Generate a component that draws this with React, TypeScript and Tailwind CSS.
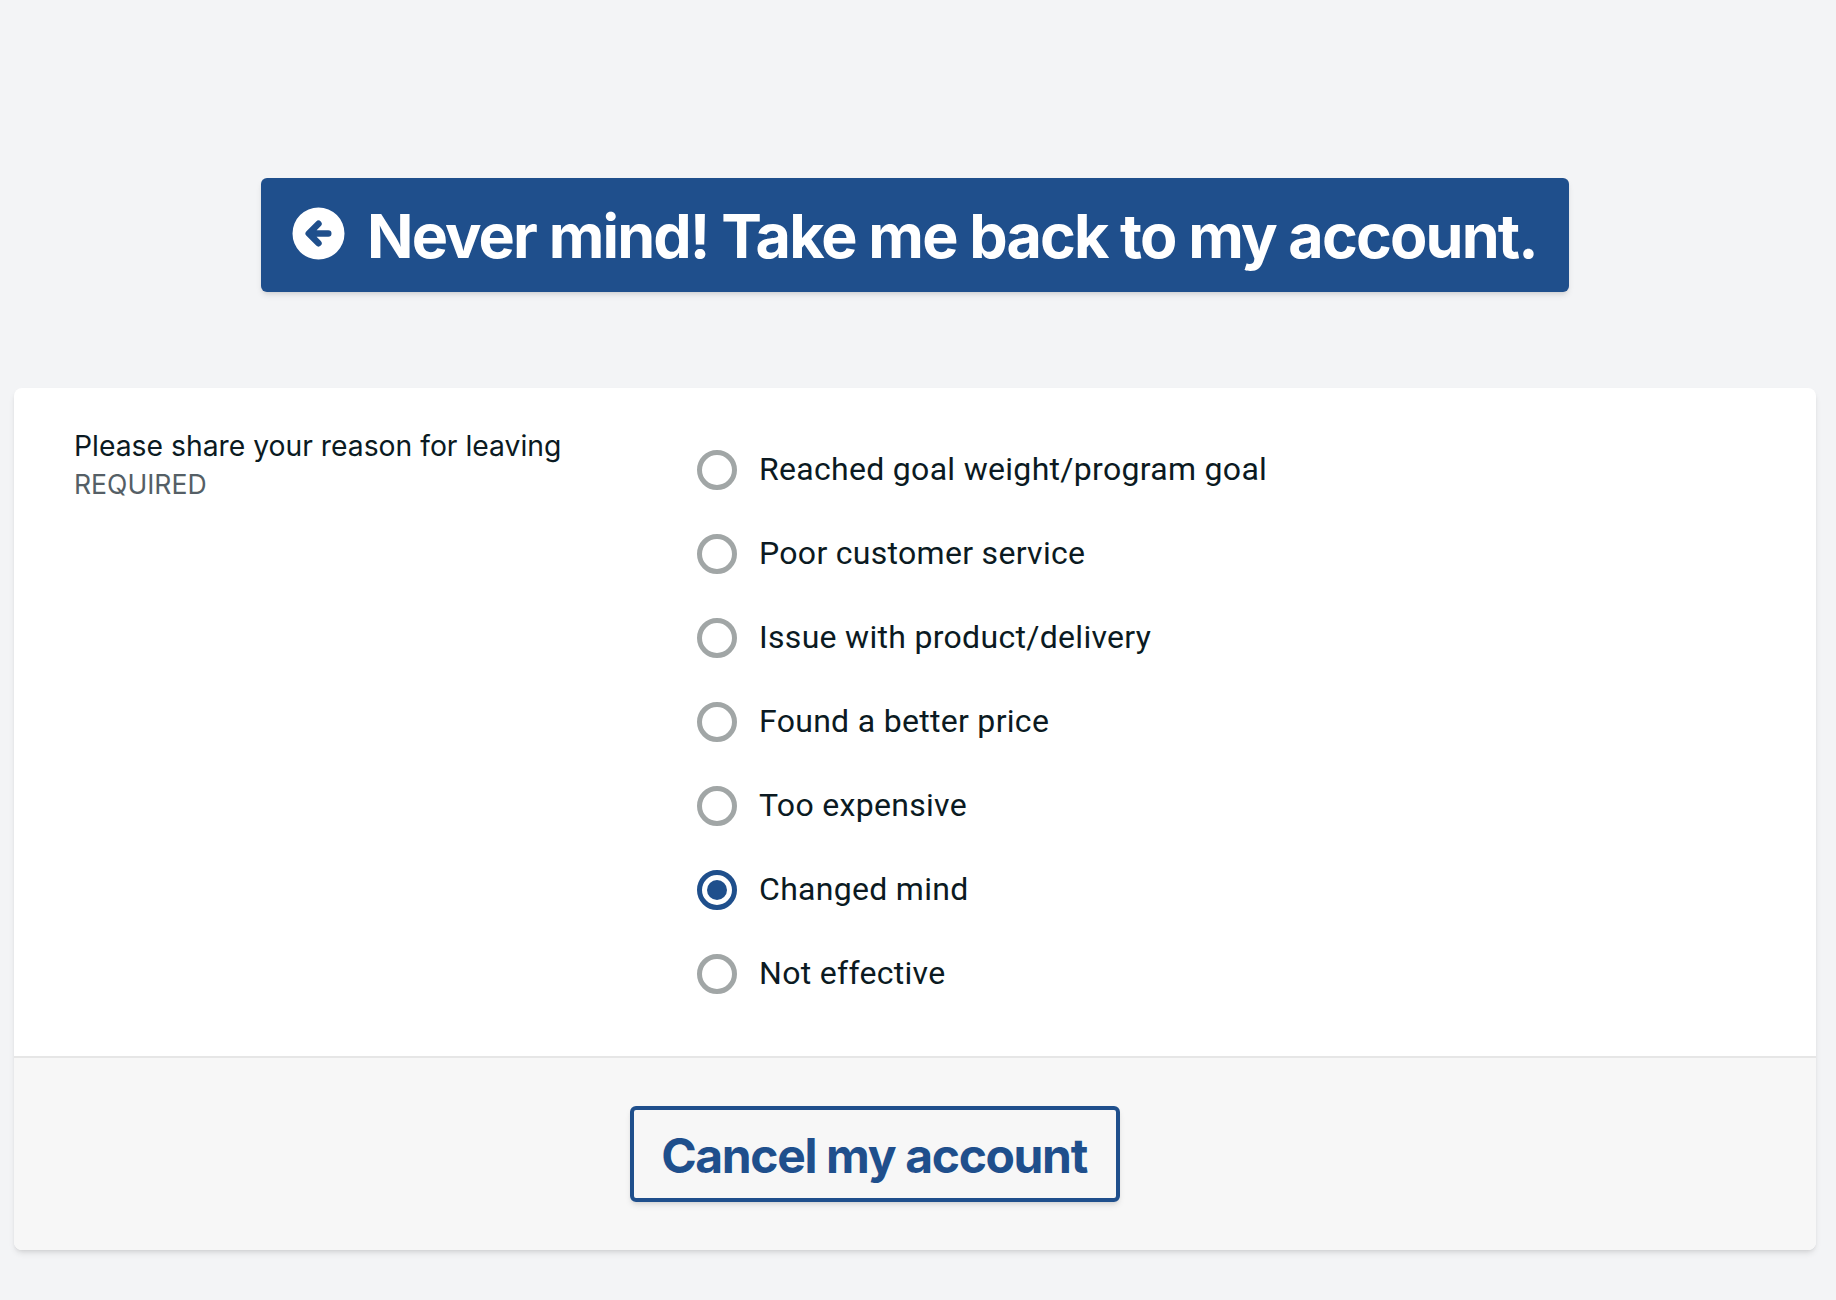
const reasons = [
  'Reached goal weight/program goal',
  'Poor customer service',
  'Issue with product/delivery',
  'Found a better price',
  'Too expensive',
  'Changed mind',
  'Not effective',
];

const selected = 'Changed mind';

function Radio({ checked }: { checked: boolean }) {
  return (
    <span
      className={`flex h-10 w-10 shrink-0 items-center justify-center rounded-full border-[5px] bg-white ${
        checked ? 'border-[#1f4f8c]' : 'border-[#a1a6a6]'
      }`}
    >
      {checked && <span className="h-5 w-5 rounded-full bg-[#1f4f8c]" />}
    </span>
  );
}

export default function App() {
  return (
    <div className="min-h-[1300px] bg-[#f3f4f6] pl-[14px] pr-[20px] pt-[178px] font-['Inter',sans-serif]">
      <div className="flex justify-center">
        <button
          type="button"
          className="flex h-[114px] w-[1308px] items-center rounded-md bg-[#1f4f8c] pl-[25px] text-[61px] font-[650] tracking-[-1.86px] text-white shadow-md"
        >
          <svg viewBox="0 0 20 20" fill="currentColor" className="-mt-[3px] h-[65px] w-[65px] shrink-0">
            <path
              fillRule="evenodd"
              clipRule="evenodd"
              d="M10 18a8 8 0 100-16 8 8 0 000 16zm.707-10.293a1 1 0 00-1.414-1.414l-3 3a1 1 0 000 1.414l3 3a1 1 0 001.414-1.414L9.414 11H13a1 1 0 100-2H9.414l1.293-1.293z"
            />
          </svg>
          <span className="ml-[16px] pt-[3px]">Never mind! Take me back to my account.</span>
        </button>
      </div>

      <div className="mt-[96px] overflow-hidden rounded-lg bg-white shadow-md">
        <div className="flex py-10 pl-[60px]">
          <div className="w-[623px] shrink-0">
            <div className="-mt-[2px] text-[28.3px] leading-[40px] text-[#0b1a22]">Please share your reason for leaving</div>
            <div className="text-[26.6px] leading-[36px] text-[#555f66]">REQUIRED</div>
          </div>
          <div className="flex flex-col">
            {reasons.map((reason) => (
              <label key={reason} className="flex h-[84px] items-center gap-[22px]">
                <Radio checked={reason === selected} />
                <span className="pb-[2px] font-['Roboto',sans-serif] text-[32px] tracking-[0.3px] text-[#0b1a22]">{reason}</span>
              </label>
            ))}
          </div>
        </div>
        <div className="flex justify-center border-t-2 border-[#e6e6e6] bg-[#f7f7f7] py-12 pr-[80px]">
          <button
            type="button"
            className="flex h-[96px] w-[490px] items-center justify-center rounded-md border-4 border-[#1f4f8c] pr-[2px] pt-[3px] text-[48px] font-[650] tracking-[-1.36px] text-[#1f4f8c] shadow-md"
          >
            Cancel my account
          </button>
        </div>
      </div>
    </div>
  );
}
